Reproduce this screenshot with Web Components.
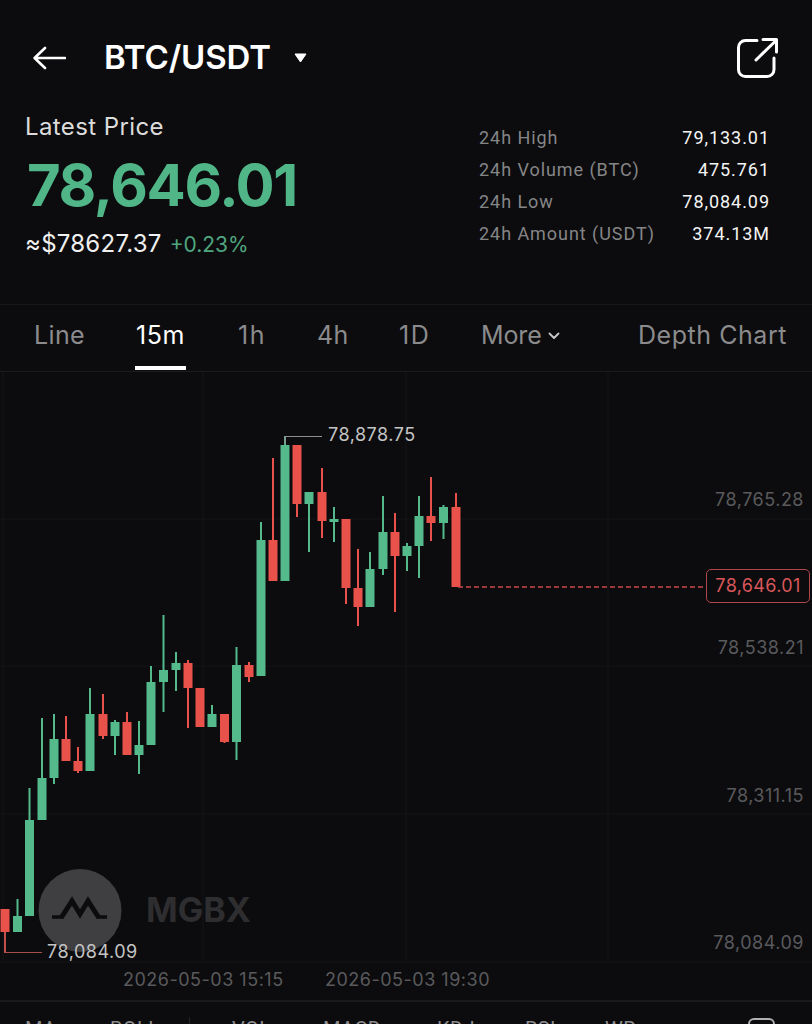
<!DOCTYPE html>
<html lang="en">
<head>
<meta charset="utf-8">
<title>BTC/USDT</title>
<style>
html,body{margin:0;padding:0;background:#0c0c0e;height:1024px;overflow:hidden}
body{font-family:Inter,"Liberation Sans",sans-serif;color:#fff}
</style>
</head>
<body>
<trade-screen>
  <pair-header pair="BTC/USDT"></pair-header>
  <price-panel>
    <stat-row label="24h High" value="79,133.01"></stat-row>
    <stat-row label="24h Volume (BTC)" value="475.761"></stat-row>
    <stat-row label="24h Low" value="78,084.09"></stat-row>
    <stat-row label="24h Amount (USDT)" value="374.13M"></stat-row>
  </price-panel>
  <interval-tabs></interval-tabs>
  <kline-chart></kline-chart>
  <indicator-bar></indicator-bar>
</trade-screen>
<script>
function shadow(el, html){ el.attachShadow({mode:'open'}).innerHTML = html; }

customElements.define('trade-screen', class extends HTMLElement{
  connectedCallback(){ shadow(this, `<style>:host{display:flex;flex-direction:column;width:812px;height:1024px;overflow:hidden;background:#0c0c0e}</style><slot></slot>`); }
});

customElements.define('pair-header', class extends HTMLElement{
  connectedCallback(){
    shadow(this, `<style>
      :host{display:flex;align-items:center;height:37px;padding:39px 34px 0 33px;margin-bottom:-2px;flex:none}
      svg{display:block;flex:none}
      .t{font:600 33px/37px Inter,"Liberation Sans",sans-serif;color:#fff;margin-left:38px;letter-spacing:-.1px;white-space:nowrap}
      .c{margin-left:23px}
      .s{margin-left:auto}
    </style>
    <svg width="33" height="24" viewBox="0 0 33 24" fill="none" stroke="#fff" stroke-width="2.600" stroke-linecap="round" stroke-linejoin="round"><path d="M32 12H2M12 2 1.600 12 12 22"/></svg>
    <span class="t">${this.getAttribute('pair')}</span>
    <svg class="c" width="13" height="10" viewBox="0 0 13 10"><path d="M1 1h11L6.500 9z" fill="#fff" stroke="#fff" stroke-linejoin="round"/></svg>
    <svg class="s" width="42" height="42" viewBox="0 0 42 42" fill="none" stroke="#fff" stroke-width="3" stroke-linecap="round" stroke-linejoin="round"><path d="M21 3.500H9.500a7 7 0 0 0-7 7V32.500a7 7 0 0 0 7 7H31a7 7 0 0 0 7-7V21"/><path d="M20 23 39 4.500M27 2.500H40.500V15" /></svg>`);
  }
});

customElements.define('price-panel', class extends HTMLElement{
  connectedCallback(){
    shadow(this, `<style>
      :host{display:flex;justify-content:space-between;height:230px;padding:0 42px 0 26px;border-bottom:1px solid #18181a;flex:none}
      .l{padding-top:38px}
      .h{font:400 24px/29px Inter,"Liberation Sans",sans-serif;color:#dcdcdc;letter-spacing:.4px;margin-left:-1px}
      .p{font:700 58px/72px Inter,"Liberation Sans",sans-serif;color:#50b688;margin:8px 0 0 1px;letter-spacing:-1.300px;white-space:nowrap}
      .q{font:400 24px/28px Inter,"Liberation Sans",sans-serif;color:#f0f0f0;margin-top:9px;white-space:nowrap;letter-spacing:.25px;margin-left:-1px}
      .q span{color:#4fa67f;font-size:21px;margin-left:1px;letter-spacing:0}
      .r{width:291px;padding-top:48px;display:flex;flex-direction:column}
    </style>
    <div class="l"><div class="h">Latest Price</div><div class="p">78,646.01</div><div class="q">≈$78627.37 <span>+0.23%</span></div></div>
    <div class="r"><slot></slot></div>`);
  }
});

customElements.define('stat-row', class extends HTMLElement{
  connectedCallback(){
    shadow(this, `<style>
      :host{display:flex;justify-content:space-between;height:32px;align-items:center;font:400 18px/32px Roboto,"Liberation Sans",sans-serif;letter-spacing:.95px;white-space:nowrap}
      .a{color:#858587}.b{color:#f4f4f4}
    </style><span class="a">${this.getAttribute('label')}</span><span class="b">${this.getAttribute('value')}</span>`);
  }
});

customElements.define('interval-tabs', class extends HTMLElement{
  connectedCallback(){
    shadow(this, `<style>
      :host{display:block;position:relative;height:66px;border-bottom:1px solid #1c1c1e;flex:none;font:400 25px/61px Inter,"Liberation Sans",sans-serif;color:#8b8b8d}
      nav{display:flex;height:66px;padding:0 25px 0 34px;align-items:flex-start}
      a{display:block;position:relative;letter-spacing:.55px;white-space:nowrap}
      a.on{color:#fff}
      a.on::after{content:"";position:absolute;left:-1px;right:-1px;height:4px;background:#fff;top:61px}
      .l{width:102px}.m{width:102px}.h1{width:80px}.h4{width:81px}.d{width:82px}
      .more{display:flex;align-items:center;gap:6px;letter-spacing:-.1px}
      .dep{margin-left:auto}
      svg{display:block;margin-top:1px}
    </style>
    <nav>
      <a class="l" style="letter-spacing:.35px">Line</a><div class="m"><a class="on" style="display:inline-block">15m</a></div><a class="h1" style="letter-spacing:1.5px">1h</a><a class="h4" style="margin-left:-1px;width:82px;letter-spacing:.3px">4h</a><a class="d" style="letter-spacing:1.5px">1D</a>
      <a class="more">More<svg width="12" height="8" viewBox="0 0 12 8" fill="none" stroke="#c8c8c8" stroke-width="1.800" stroke-linecap="round" stroke-linejoin="round"><path d="M1.500 1.500 6 6l4.500-4.500"/></svg></a>
      <a class="dep">Depth Chart</a>
    </nav>`);
  }
});

customElements.define('kline-chart', class extends HTMLElement{
  connectedCallback(){
    const G='#55ba8b',R='#e8524a';
    const c=[
      [5,909,932,909,953,R],[17.500,916,932,899,932,G],[29.500,820,916,788,916,G],[42,778,820,718,820,G],
      [54,739,778,714,784,G],[66,739,761,716,761,R],[78,761,771,747,773,R],[90,714,771,688,771,G],
      [103,714,736,694,739,R],[115,722,736,720,755,G],[127,722,755,712,755,R],[139,745,755,721,774,G],
      [151,682,745,666,745,G],[163.500,670,682,615,712,G],[176,663,670,652,691,G],[188,663,688,660,728,R],
      [200,688,727,688,727,R],[212,714,727,705,727,G],[224.500,714,742,714,743,R],[236.500,665,742,647,760,G],
      [249,665,677,662,682,R],[261,540,676,522,676,G],[273,540,581,458,581,R],[285,445,581,436,581,G],
      [297,445,504,445,517,R],[309,492,504,492,552,G],[322,492,521,468,538,R],[334,519,522,507,542,G],
      [346,519,588,519,604,R],[358,588,607,549,626,R],[370,569,607,552,607,G],[383,532,569,496,575,G],
      [395,532,556,513,612,R],[407,546,556,543,571,G],[419,516,546,496,578,G],[431,516,523,477,541,R],
      [443.500,507,523,505,539,G],[456,507,587,493,587,R]
    ];
    const candles=c.map(([x,t,b,wt,wb,col])=>`<rect x="${x-1}" y="${wt}" width="2" height="${wb-wt}" fill="${col}"/><rect x="${x-4.500}" y="${t}" width="9" height="${b-t}" fill="${col}"/>`).join('');
    const grid=[519,666,814,962].map(y=>`<path d="M0 ${y}H812"/>`).join('')+[3,203,406,608].map(x=>`<path d="M${x} 372V962"/>`).join('');
    const axis=[['78,765.28',500],['78,538.21',648],['78,311.15',796],['78,084.09',943]];
    shadow(this, `<style>
      :host{display:block;position:relative;height:628px;flex:none;overflow:hidden}
      svg{position:absolute;left:0;top:0;width:812px;height:628px}
      span{position:absolute;white-space:nowrap;font:400 18px/22px Inter,"Liberation Sans",sans-serif;letter-spacing:.5px}
      .y{right:8px;color:#5a5a5d}
      .x{color:#5a5a5d}
      .m{color:#c4c4c4}
      .price{left:706px;top:197px;border:1.500px solid #b0474b;border-radius:5px;box-sizing:content-box;width:102px;height:32px;text-align:center;line-height:32px;color:#d9575a;background:#0c0c0e;letter-spacing:.35px}
      .brand{left:146px;top:515px;font:700 34px/46px Inter,"Liberation Sans",sans-serif;color:#2e2e31;letter-spacing:0}
    </style>
    <svg viewBox="0 372 812 628" aria-hidden="true">
      <g stroke="#151517" stroke-width="1" fill="none">${grid}</g>
      <circle cx="80" cy="910.500" r="41.500" fill="#3f3f42"/>
      <path d="M52 917H63M97 917H107" fill="none" stroke="#0c0c0e" stroke-width="3.500"/>
      <path d="M61 918 72 901 80 914 88 901 99 918" fill="none" stroke="#0c0c0e" stroke-width="5" stroke-linejoin="miter"/>
      ${candles}
      <path d="M285 444V436.500H322" fill="none" stroke="#8e8e90" stroke-width="1.200"/>
      <path d="M5 932V952.500H42" fill="none" stroke="#a8504c" stroke-width="1.200"/>
      <path d="M458 587H706" fill="none" stroke="#c9484a" stroke-width="1.300" stroke-dasharray="5 3"/>
    </svg>
    ${axis.map(([t,y])=>`<span class="y" style="top:${y-372-11}px">${t}</span>`).join('')}
    <span class="price">78,646.01</span>
    <span class="m" style="left:328px;top:52px">78,878.75</span>
    <span class="m" style="left:47px;top:569px">78,084.09</span>
    <span class="x" style="left:123px;top:597px">2026-05-03 15:15</span>
    <span class="x" style="left:325px;top:597px">2026-05-03 19:30</span>
    <span class="brand">MGBX</span>`);
  }
});

customElements.define('indicator-bar', class extends HTMLElement{
  connectedCallback(){
    shadow(this, `<style>
      :host{display:flex;align-items:flex-start;height:24px;border-top:2px solid #1a1a1c;flex:none;overflow:hidden;font:400 20px/24px Roboto,"Liberation Sans",sans-serif;color:#8b8b8d;padding:0 0 0 25px;white-space:nowrap}
      span{display:block;margin-top:15px;letter-spacing:.4px}
      i{display:block;width:1px;height:8px;background:#232325;margin-top:15px}
      b{display:block;width:27px;height:30px;border:2px solid #b0b0b2;border-radius:6px;margin:16px 0 0 0;box-sizing:border-box}
    </style>
    <span style="width:85px">MA</span><span style="width:79px">BOLL</span><i></i>
    <span style="margin-left:42px;width:91px">VOL</span><span style="width:114px">MACD</span><span style="width:88px">KDJ</span><span style="width:80px">RSI</span><span style="width:143px">WR</span><b></b>`);
  }
});
</script>
</body>
</html>
